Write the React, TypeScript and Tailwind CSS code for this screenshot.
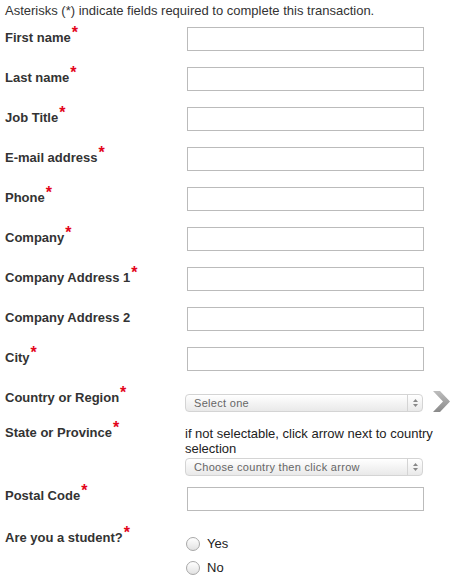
import React from "react";

const FIELDS = [
  { label: "First name", req: true },
  { label: "Last name", req: true },
  { label: "Job Title", req: true },
  { label: "E-mail address", req: true },
  { label: "Phone", req: true },
  { label: "Company", req: true },
  { label: "Company Address 1", req: true },
  { label: "Company Address 2", req: false },
  { label: "City", req: true },
];

function Label({ text, req }: { text: string; req?: boolean }) {
  return (
    <span className="relative -top-[2px] text-[13px] leading-[16px] font-bold text-[#333]">
      {text}
      {req && <span className="relative top-[-4px] ml-[1px] text-[#e3051b] text-[16px] leading-none">*</span>}
    </span>
  );
}

function TextInput() {
  return <input type="text" className="w-[237px] h-[24px] border border-[#bbb] bg-white outline-none" />;
}

function FakeSelect({ text }: { text: string }) {
  return (
    <div className="w-[238px] h-[18px] flex items-center rounded-[4px] border border-[#d4d4d4] bg-gradient-to-b from-white to-[#e9e9e9] shadow-[inset_0_1px_0_#fff]">
      <span className="flex-1 pl-[8px] text-[11px] leading-none tracking-[0.3px] text-[#666]">{text}</span>
      <span className="w-[15px] h-full border-l border-[#d4d4d4] flex flex-col items-center justify-center gap-[2px]">
        <svg width="5" height="3" viewBox="0 0 5 3"><path d="M0 3 L2.5 0 L5 3 Z" fill="#888" /></svg>
        <svg width="5" height="3" viewBox="0 0 5 3"><path d="M0 0 L2.5 3 L5 0 Z" fill="#888" /></svg>
      </span>
    </div>
  );
}

function Radio({ text }: { text: string }) {
  return (
    <label className="flex items-center h-[24px]">
      <span className="w-[14px] h-[14px] rounded-full border border-[#a8a8a8] bg-gradient-to-b from-white to-[#e2e2e2]" />
      <span className="ml-[7px] text-[13px] text-[#222]">{text}</span>
    </label>
  );
}

export default function App() {
  return (
    <div className="w-[465px] h-[587px] bg-white px-[5px] pt-[3px] overflow-hidden" style={{ fontFamily: '"Liberation Sans", Arial, sans-serif' }}>
      <p className="text-[13px] leading-[16px] text-[#333]">Asterisks (*) indicate fields required to complete this transaction.</p>

      <div className="mt-[8px] flex flex-col gap-[16px]">
        {FIELDS.map((f) => (
          <div key={f.label} className="flex items-center">
            <div className="w-[182px]"><Label text={f.label} req={f.req} /></div>
            <TextInput />
          </div>
        ))}
      </div>

      <div className="mt-[18px] flex items-start">
        <div className="w-[180px] -mt-[2px]"><Label text="Country or Region" req /></div>
        <div className="mt-[5px]"><FakeSelect text="Select one" /></div>
        <svg className="ml-[9px] mt-[2px]" width="19" height="21" viewBox="0 0 19 21">
          <defs>
            <linearGradient id="chev" x1="0" y1="0" x2="0" y2="1">
              <stop offset="0" stopColor="#bdbdbd" />
              <stop offset="1" stopColor="#8a8a8a" />
            </linearGradient>
          </defs>
          <path d="M1 0 H8 L18 10.5 L8 21 H1 L11 10.5 Z" fill="url(#chev)" />
        </svg>
      </div>

      <div className="mt-[11px] flex items-start">
        <div className="w-[180px] -mt-[1px]"><Label text="State or Province" req /></div>
        <div className="flex flex-col">
          <p className="mt-[3px] w-[260px] text-[13px] leading-[15px] text-[#222]">if not selectable, click arrow next to country selection</p>
          <div className="mt-[2px]"><FakeSelect text="Choose country then click arrow" /></div>
        </div>
      </div>

      <div className="mt-[11px] flex items-center">
        <div className="w-[182px] -mt-[5px]"><Label text="Postal Code" req /></div>
        <TextInput />
      </div>

      <div className="mt-[18px] flex items-start">
        <div className="w-[181px] -mt-[2px]"><Label text="Are you a student?" req /></div>
        <div className="flex flex-col mt-[3px]">
          <Radio text="Yes" />
          <Radio text="No" />
        </div>
      </div>
    </div>
  );
}
